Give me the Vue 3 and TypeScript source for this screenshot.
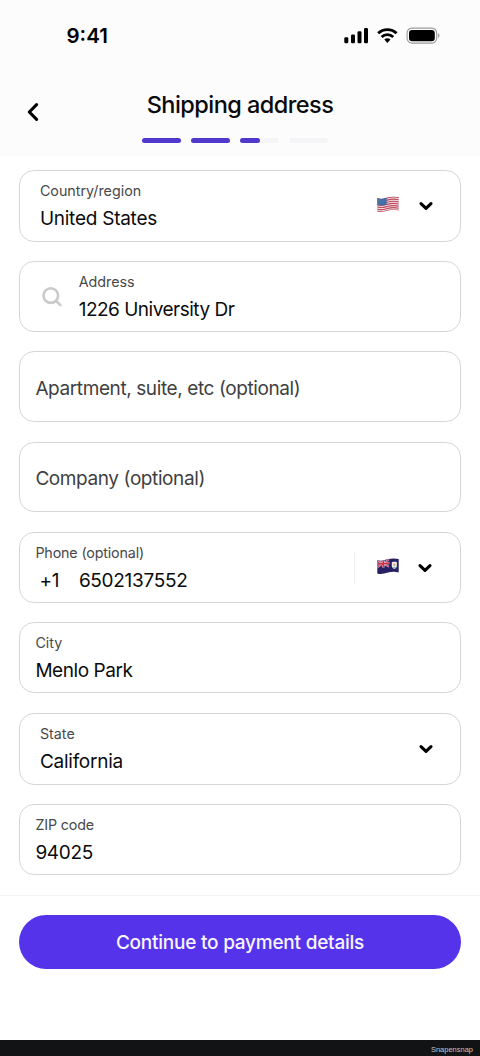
<script setup lang="ts">
interface Field {
  id: string
  label?: string
  value?: string
  placeholder?: string
  prefix?: string
  kind: 'text' | 'select' | 'search' | 'phone'
  flag?: 'us' | 'ai'
}

const fields: Field[] = [
  { id: 'country', label: 'Country/region', value: 'United States', kind: 'select', flag: 'us' },
  { id: 'address', label: 'Address', value: '1226 University Dr', kind: 'search' },
  { id: 'apartment', placeholder: 'Apartment, suite, etc (optional)', kind: 'text' },
  { id: 'company', placeholder: 'Company (optional)', kind: 'text' },
  { id: 'phone', label: 'Phone (optional)', prefix: '+1', value: '6502137552', kind: 'phone', flag: 'ai' },
  { id: 'city', label: 'City', value: 'Menlo Park', kind: 'text' },
  { id: 'state', label: 'State', value: 'California', kind: 'select' },
  { id: 'zip', label: 'ZIP code', value: '94025', kind: 'text' },
]

const steps: number[] = [100, 100, 50, 0]
const stripes: number[] = [0, 1, 2, 3, 4, 5, 6]
</script>

<template>
  <div class="screen">
    <header class="top">
      <div class="status">
        <span class="time">9:41</span>
        <svg class="status-icons" width="98" height="20" viewBox="0 0 98 20">
          <rect x="1.3" y="11.3" width="4" height="5.9" rx="1.2" />
          <rect x="8" y="8.5" width="4" height="8.7" rx="1.2" />
          <rect x="14.5" y="5.2" width="4" height="12" rx="1.2" />
          <rect x="21" y="2" width="4" height="15.2" rx="1.2" />
          <g fill="none" stroke="#000" stroke-width="2.8">
            <path d="M35.2 7.3a13.2 13.2 0 0 1 18.4 0" />
            <path d="M38.6 11a8.4 8.4 0 0 1 11.6 0" />
          </g>
          <path d="M41.3 13.6a4.6 4.6 0 0 1 6.2 0L44.4 17z" />
          <rect x="64.1" y="2.1" width="29.6" height="15" rx="4.8" fill="none" stroke="#999" stroke-width="1.1" />
          <rect x="66" y="4" width="25.8" height="11.2" rx="3.2" />
          <path d="M95.2 7.3c1.7.6 1.7 4 0 4.6z" fill="#999" />
        </svg>
      </div>
      <div class="heading">
        <svg class="back" width="16" height="22" viewBox="0 0 16 22">
          <path d="M11.6 3.7 4.3 11l7.3 7.3" />
        </svg>
        <h1>Shipping address</h1>
      </div>
      <div class="steps">
        <span v-for="(step, i) in steps" :key="i" class="step">
          <span class="fill" :style="{ width: step + '%' }"></span>
        </span>
      </div>
    </header>

    <main class="form">
      <div v-for="f in fields" :key="f.id" class="field" :class="[f.kind, f.id]">
        <svg v-if="f.kind === 'search'" class="search-icon" width="22" height="22" viewBox="0 0 22 22">
          <circle cx="9.8" cy="9.6" r="7.3" />
          <path d="m15.2 15 4.2 4.1" />
        </svg>
        <div class="body">
          <span v-if="f.placeholder" class="placeholder">{{ f.placeholder }}</span>
          <template v-else>
            <span class="label">{{ f.label }}</span>
            <span class="value"><span v-if="f.prefix" class="prefix">{{ f.prefix }}</span><span class="entry">{{ f.value }}</span></span>
          </template>
        </div>
        <span v-if="f.kind === 'phone'" class="divider"></span>
        <svg v-if="f.flag === 'us'" class="flag" width="22" height="17" viewBox="0 0 22 17">
          <defs>
            <clipPath id="us-wave">
              <path d="M.3 2.1C5 3.5 8 1.9 11 1.1c4-1 7-.9 10.7-.1v13.4c-4-1-7-.8-10.7.1-4 1.1-7 2-10.7.9z" />
            </clipPath>
          </defs>
          <g clip-path="url(#us-wave)">
            <rect width="22" height="17" fill="#eadde0" />
            <path
              v-for="s in stripes"
              :key="s"
              :transform="`translate(0 ${s * 2.13})`"
              d="M0 2.3C5 4 8 2.5 11 1.7c4-1 7-.9 11-.1"
              fill="none"
              stroke="#c24d60"
              stroke-width="1.15"
            />
            <path d="M0 1.2C4 3.5 7 2.5 9.7 1.5v7C6 9.7 4 9.8 0 9z" fill="#456ca5" />
            <path d="M1.5 4.4c3 .4 5 0 7-.7M1.5 6.4c3 .4 5 0 7-.7" fill="none" stroke="#6f90c0" stroke-width=".6" stroke-dasharray=".7 1" />
          </g>
        </svg>
        <svg v-if="f.flag === 'ai'" class="flag" width="22" height="17" viewBox="0 0 22 17">
          <defs>
            <clipPath id="ai-wave">
              <path d="M.3 2.1C5 3.5 8 1.9 11 1.1c4-1 7-.9 10.7-.1v13.4c-4-1-7-.8-10.7.1-4 1.1-7 2-10.7.9z" />
            </clipPath>
          </defs>
          <g clip-path="url(#ai-wave)">
            <rect width="22" height="17" fill="#272064" />
            <path d="m0 2 12 6.7M0 9.5 12 1.4" stroke="#d9c6dc" stroke-width="1.6" />
            <path d="m0 2 12 6.7M0 9.5 12 1.4" stroke="#cc4057" stroke-width=".9" />
            <path d="M6.2 1v8.4M0 6.1l12.3-1" stroke="#f0dfe6" stroke-width="2.5" />
            <path d="M6.2 1v8.4M0 6.1l12.3-1" stroke="#cf2f45" stroke-width="1.6" />
            <path d="M14.8 4.2c1.7-.6 3.5-.6 5.1-.2v3.5c0 1.8-1.2 3-2.5 3.6-1.4-.6-2.6-1.7-2.6-3.4z" fill="#eee9e5" />
            <path d="m16.2 6.3 1.2-1 1.2 1-.5 1.6h-1.4z" fill="#d2ad84" />
            <path d="M15.6 9.1h3.7l-1.9 1.5z" fill="#75b8c5" />
          </g>
        </svg>
        <svg v-if="f.kind === 'select' || f.kind === 'phone'" class="chevron" width="16" height="12" viewBox="0 0 16 12">
          <path d="m3 3.6 5 4.8 5-4.8" />
        </svg>
      </div>
    </main>

    <footer class="actions">
      <button type="button" class="primary">Continue to payment details</button>
    </footer>
    <div class="credit">Snapensnap</div>
  </div>
</template>

<style>
body {
  margin: 0;
  background: #fff;
}
</style>

<style scoped>
.screen {
  width: 480px;
  height: 1056px;
  display: flex;
  flex-direction: column;
  overflow: hidden;
  background: #fff;
  color: #0b0b0d;
  font-family: Inter, "Liberation Sans", sans-serif;
}
.screen * {
  box-sizing: border-box;
}
.top {
  height: 156px;
  flex: none;
  background: #fcfcfc;
}
.status {
  height: 72px;
  display: flex;
  align-items: center;
  justify-content: space-between;
  padding: 0 39px 0 66.5px;
}
.time {
  margin-top: -2px;
  font-size: 20.5px;
  font-weight: 600;
  letter-spacing: 0;
  color: #000;
}
.status-icons {
  margin-top: -1px;
}
.heading {
  height: 65px;
  display: flex;
  align-items: flex-start;
  padding-left: 25px;
}
.back {
  margin-top: 29px;
}
.back path,
.chevron path {
  fill: none;
  stroke: #000;
  stroke-width: 3.1;
  stroke-linecap: round;
  stroke-linejoin: round;
}
h1 {
  flex: 1;
  margin: 17px 41px 0 0;
  text-align: center;
  font-size: 23.5px;
  line-height: 32px;
  font-weight: 500;
  letter-spacing: -0.55px;
}
.steps {
  display: flex;
  justify-content: center;
  gap: 9.8px;
  padding: 0.5px 9.5px 0 0;
}
.step {
  width: 39.1px;
  height: 5.5px;
  border-radius: 3px;
  background: #f5f5f7;
}
.fill {
  display: block;
  height: 100%;
  border-radius: 3px;
  background: #5038cd;
}
.form {
  flex: none;
  height: 739px;
  padding: 13.5px 19.4px 0;
  display: flex;
  flex-direction: column;
  gap: 19.5px;
}
.field {
  flex: none;
  height: 70.8px;
  display: flex;
  align-items: center;
  padding: 0 25.8px 0 15px;
  border: 1px solid #d6d6d6;
  border-radius: 15px;
}
.field.select {
  height: 72.1px;
  padding-left: 19.5px;
}
.body {
  flex: 1;
  height: 100%;
  padding-top: 9.6px;
  display: flex;
  flex-direction: column;
}
.select .body {
  padding-top: 10px;
}
.label {
  font-size: 14.3px;
  line-height: 20px;
  color: #49494b;
}
.phone .label,
.zip .label {
  letter-spacing: -0.16px;
}
.value {
  display: flex;
  font-size: 19px;
  line-height: 35px;
  letter-spacing: -0.3px;
}
.address .value {
  letter-spacing: -0.5px;
}
.city .value {
  letter-spacing: -0.45px;
}
.state .value,
.country .value {
  letter-spacing: -0.25px;
}
.prefix {
  width: 43.5px;
  padding-left: 4px;
}
.placeholder {
  margin-top: 9px;
  font-size: 19px;
  line-height: 35px;
  letter-spacing: -0.4px;
  color: #3f3f41;
}
.search-icon {
  margin: 2px 16.3px 0 6px;
}
.address .body {
  margin-left: -1px;
}
.search-icon circle,
.search-icon path {
  fill: none;
  stroke: #cacaca;
  stroke-width: 2.6;
  stroke-linecap: round;
}
.divider {
  width: 1px;
  height: 33px;
  margin-right: 22px;
  background: #f0f2f3;
}
.flag {
  margin-right: 19px;
  margin-top: -2px;
}
.phone .flag {
  margin-top: -1px;
}
.phone .chevron {
  margin: 1px 1px 0 -1px;
}
.actions {
  height: 145px;
  flex: none;
  padding: 19.4px 19.4px 0;
  border-top: 1px solid #f3f3f3;
}
.primary {
  display: block;
  width: 100%;
  height: 53.5px;
  padding: 1px 0 0;
  border: 0;
  border-radius: 27px;
  background: #5433eb;
  color: #f8f5ff;
  font: 500 19px/54px Inter, "Liberation Sans", sans-serif;
  letter-spacing: -0.23px;
}
.credit {
  flex: 1;
  padding-right: 7px;
  background: #121315;
  color: #c5c5c5;
  text-align: right;
  font: 7.5px/19px "Liberation Sans", sans-serif;
}
</style>
